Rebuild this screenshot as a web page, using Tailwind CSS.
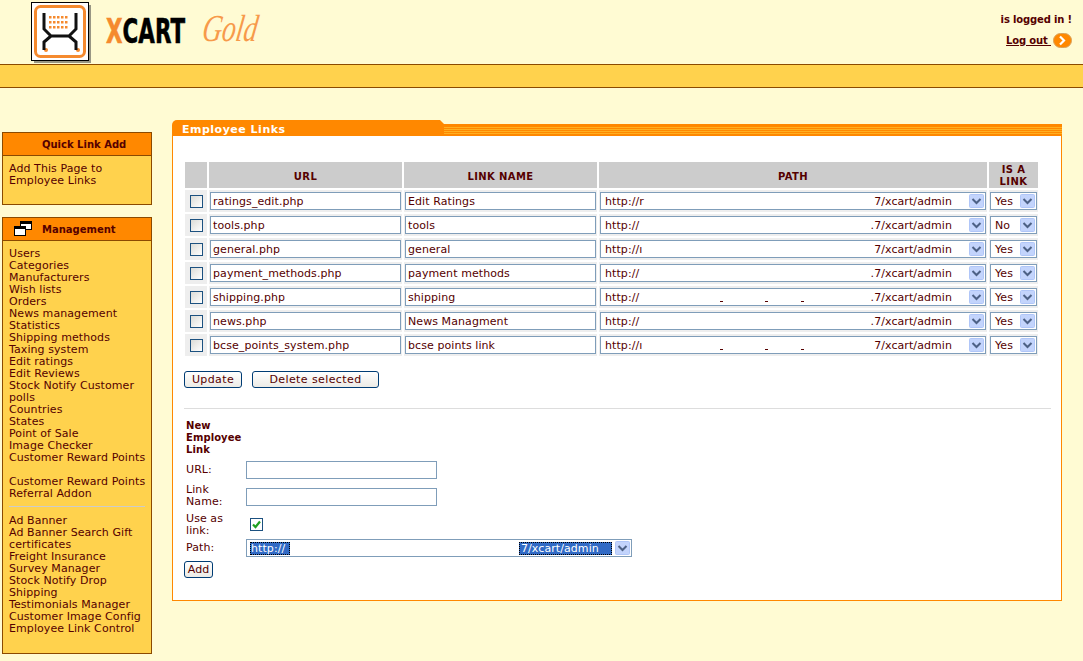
<!DOCTYPE html>
<html lang="en">
<head>
<meta charset="utf-8">
<title>X-Cart Gold - Employee Links</title>
<script src="https://cdn.jsdelivr.net/npm/@tailwindcss/browser@4"></script>
</head>
<body class="bg-[#FFFBD3] text-[#550000] text-[11px] leading-[12px] tracking-[0.08px] font-['DejaVu_Sans','Liberation_Sans',sans-serif] w-[1083px] h-[661px] overflow-hidden">
<header class="h-[64px] flex justify-between">
  <svg width="300" height="64" viewBox="0 0 300 64">
    <rect x="34" y="5" width="57" height="58" fill="#444" opacity=".55"/>
    <rect x="31.500" y="2.500" width="57" height="58" fill="#fff" stroke="#000"/>
    <rect x="35.500" y="6.500" width="49" height="50" rx="5" fill="#fff" stroke="#F58A2E" stroke-width="3"/>
    <g fill="#F58A2E">
      <rect x="49" y="16" width="2.500" height="2.500"/><rect x="53" y="16" width="2.500" height="2.500"/><rect x="57" y="16" width="2.500" height="2.500"/><rect x="61" y="16" width="2.500" height="2.500"/><rect x="65" y="16" width="2.500" height="2.500"/>
      <rect x="49" y="21" width="2.500" height="2.500"/><rect x="53" y="21" width="2.500" height="2.500"/><rect x="57" y="21" width="2.500" height="2.500"/><rect x="61" y="21" width="2.500" height="2.500"/><rect x="65" y="21" width="2.500" height="2.500"/>
      <rect x="49" y="26" width="2.500" height="2.500"/><rect x="53" y="26" width="2.500" height="2.500"/><rect x="57" y="26" width="2.500" height="2.500"/><rect x="61" y="26" width="2.500" height="2.500"/><rect x="65" y="26" width="2.500" height="2.500"/>
      <circle cx="46" cy="50" r="2"/><circle cx="78" cy="50" r="2"/>
    </g>
    <path d="M44 13V29L51 36H69L76 29V13M51 36L44 42V50M69 36L76 42V50" fill="none" stroke="#111" stroke-width="3"/>
    <text transform="translate(106 43) scale(.63 1)" font-family="'DejaVu Sans','Liberation Sans',sans-serif" font-weight="700" font-size="34" stroke="#000" stroke-width=".6" fill="#000"><tspan fill="#F58A2E" stroke="#F58A2E">X</tspan>CART</text>
    <text transform="translate(201 41) scale(.72 1) skewX(-12)" font-family="'Liberation Serif',serif" font-style="italic" font-size="38" fill="#F79A4A">Gold</text>
  </svg>
  <div class="w-[120px] mr-[11px] flex flex-col items-end font-bold text-[10px] tracking-[-0.15px]">
    <p class="mt-[14px] h-[12px]">is logged in !</p>
    <div class="mt-[7px] flex items-center gap-[2px]">
      <a class="underline">Log out&nbsp;</a>
      <svg width="19" height="15" viewBox="0 0 19 15"><rect x=".5" y=".5" width="18" height="14" rx="7" fill="#FF8800" stroke="#D9A25A"/><path d="M7 3.500L11 7.500L7 11.500" fill="none" stroke="#fff" stroke-width="2.200"/></svg>
    </div>
  </div>
</header>
<div class="h-[24px] bg-[#FFD24D] border-y border-[#8B4A00]"></div>

<div class="flex">
  <aside class="w-[150px] ml-[2px] pt-[44px] flex flex-col gap-[12px] shrink-0">
    <section class="h-[73px] border border-[#8B4A00] bg-[#FFD24D]">
      <h2 class="h-[23px] bg-[#FF8800] border-b border-[#8B4A00] flex items-center pl-[39px] pt-[2px] font-bold text-[10px] tracking-[0px]">Quick Link Add</h2>
      <p class="px-[6px] pt-[7px]">Add This Page to<br>Employee Links</p>
    </section>
    <section class="h-[437px] border border-[#8B4A00] bg-[#FFD24D]">
      <h2 class="h-[23px] bg-[#FF8800] border-b border-[#8B4A00] flex items-center pl-[39px] pt-[2px] font-bold text-[10px] tracking-[0px] relative">
        <svg class="absolute left-[11px] top-[3px]" width="18" height="16" viewBox="0 0 18 16"><rect x="6.500" y=".5" width="11" height="8" fill="#fff" stroke="#000"/><rect x="6.500" y=".5" width="11" height="2.500" fill="#000"/><rect x=".5" y="5.500" width="11" height="9" fill="#fff" stroke="#000"/><rect x=".5" y="5.500" width="11" height="2.500" fill="#000"/></svg>
        Management
      </h2>
      <div class="pl-[6px] pt-[7px]">
        <p>Users</p><p>Categories</p><p>Manufacturers</p><p>Wish lists</p><p>Orders</p><p>News management</p><p>Statistics</p><p>Shipping methods</p><p>Taxing system</p><p>Edit ratings</p><p>Edit Reviews</p><p>Stock Notify Customer</p><p>polls</p><p>Countries</p><p>States</p><p>Point of Sale</p><p>Image Checker</p><p>Customer Reward Points</p>
        <p class="mt-[12px]">Customer Reward Points</p><p>Referral Addon</p>
        <hr class="mt-[6px] mb-[8px] mr-[6px] border-0 h-[1px] bg-[#CCCCCC]">
        <p>Ad Banner</p><p>Ad Banner Search Gift</p><p>certificates</p><p>Freight Insurance</p><p>Survey Manager</p><p>Stock Notify Drop</p><p>Shipping</p><p>Testimonials Manager</p><p>Customer Image Config</p><p>Employee Link Control</p>
      </div>
    </section>
  </aside>

  <main class="w-[890px] ml-[20px] pt-[32px]">
    <div class="h-[16px] flex items-end">
      <h1 class="w-[268px] h-[16px] bg-[#FF8800] rounded-tl-[5px] text-white font-bold pl-[10px] pt-[4px] tracking-[0.5px]">Employee Links</h1>
      <div class="w-[4px] h-[16px] bg-[#FF8800] [clip-path:polygon(0_0,100%_25%,100%_100%,0_100%)]"></div>
      <div class="flex-1 h-[12px] bg-[#FF8800] pt-[3px]"><div class="h-[7px] bg-[repeating-linear-gradient(180deg,#FFB020_0px,#FFB020_1px,#FF8800_1px,#FF8800_2px)]"></div></div>
    </div>
    <div class="h-[465px] bg-white border border-t-0 border-[#FF8800] pt-[26px] pl-[12px]">
      <div class="grid grid-cols-[22px_193px_193px_388px_49px] gap-[2px] w-[853px]">
        <div class="h-[26px] bg-[#CCCCCC]"></div>
        <div class="h-[26px] bg-[#CCCCCC] flex items-center justify-center pt-[3px] font-bold text-[10px] tracking-[0.4px]">URL</div>
        <div class="h-[26px] bg-[#CCCCCC] flex items-center justify-center pt-[3px] font-bold text-[10px] tracking-[0.4px]">LINK NAME</div>
        <div class="h-[26px] bg-[#CCCCCC] flex items-center justify-center pt-[3px] font-bold text-[10px] tracking-[0.4px]">PATH</div>
        <div class="h-[26px] bg-[#CCCCCC] flex items-center justify-center pt-[1px] text-center font-bold text-[10px] tracking-[0.4px]">IS A<br>LINK</div>

        <div class="h-[22px] bg-[#EEEEEE] flex items-center justify-center"><span class="w-[13px] h-[13px] border border-[#1C5180] bg-gradient-to-br from-[#DCDCD7] to-white"></span></div>
        <div class="h-[22px] bg-[#EEEEEE] flex items-center px-[1px]"><span class="w-full h-[18px] border border-[#7F9DB9] bg-white px-[2px] leading-[18px]">ratings_edit.php</span></div>
        <div class="h-[22px] bg-[#EEEEEE] flex items-center px-[1px]"><span class="w-full h-[18px] border border-[#7F9DB9] bg-white px-[2px] leading-[18px]">Edit Ratings</span></div>
        <div class="h-[22px] bg-[#EEEEEE] flex items-center px-[1px]"><span class="w-full h-[18px] border border-[#7F9DB9] bg-white pl-[4px] leading-[18px] flex justify-between"><span>http://r</span><span class="flex items-center"><span class="mr-[16px] mt-[2px]">7/xcart/admin</span><svg width="17" height="16" viewBox="0 0 17 16"><rect x="1.500" y="1.500" width="14" height="13" rx="1" fill="#C3D4FC" stroke="#B0C6F8"/><path d="M4.500 6L8.500 10L12.500 6" fill="none" stroke="#4D6185" stroke-width="2"/></svg></span></span></div>
        <div class="h-[22px] bg-[#EEEEEE] flex items-center px-[1px]"><span class="w-full h-[18px] border border-[#7F9DB9] bg-white pl-[4px] leading-[18px] flex justify-between"><span>Yes</span><svg width="17" height="16" viewBox="0 0 17 16"><rect x="1.500" y="1.500" width="14" height="13" rx="1" fill="#C3D4FC" stroke="#B0C6F8"/><path d="M4.500 6L8.500 10L12.500 6" fill="none" stroke="#4D6185" stroke-width="2"/></svg></span></div>

        <div class="h-[22px] bg-[#EEEEEE] flex items-center justify-center"><span class="w-[13px] h-[13px] border border-[#1C5180] bg-gradient-to-br from-[#DCDCD7] to-white"></span></div>
        <div class="h-[22px] bg-[#EEEEEE] flex items-center px-[1px]"><span class="w-full h-[18px] border border-[#7F9DB9] bg-white px-[2px] leading-[18px]">tools.php</span></div>
        <div class="h-[22px] bg-[#EEEEEE] flex items-center px-[1px]"><span class="w-full h-[18px] border border-[#7F9DB9] bg-white px-[2px] leading-[18px]">tools</span></div>
        <div class="h-[22px] bg-[#EEEEEE] flex items-center px-[1px]"><span class="w-full h-[18px] border border-[#7F9DB9] bg-white pl-[4px] leading-[18px] flex justify-between"><span>http://</span><span class="flex items-center"><span class="mr-[16px] mt-[2px]">.7/xcart/admin</span><svg width="17" height="16" viewBox="0 0 17 16"><rect x="1.500" y="1.500" width="14" height="13" rx="1" fill="#C3D4FC" stroke="#B0C6F8"/><path d="M4.500 6L8.500 10L12.500 6" fill="none" stroke="#4D6185" stroke-width="2"/></svg></span></span></div>
        <div class="h-[22px] bg-[#EEEEEE] flex items-center px-[1px]"><span class="w-full h-[18px] border border-[#7F9DB9] bg-white pl-[4px] leading-[18px] flex justify-between"><span>No</span><svg width="17" height="16" viewBox="0 0 17 16"><rect x="1.500" y="1.500" width="14" height="13" rx="1" fill="#C3D4FC" stroke="#B0C6F8"/><path d="M4.500 6L8.500 10L12.500 6" fill="none" stroke="#4D6185" stroke-width="2"/></svg></span></div>

        <div class="h-[22px] bg-[#EEEEEE] flex items-center justify-center"><span class="w-[13px] h-[13px] border border-[#1C5180] bg-gradient-to-br from-[#DCDCD7] to-white"></span></div>
        <div class="h-[22px] bg-[#EEEEEE] flex items-center px-[1px]"><span class="w-full h-[18px] border border-[#7F9DB9] bg-white px-[2px] leading-[18px]">general.php</span></div>
        <div class="h-[22px] bg-[#EEEEEE] flex items-center px-[1px]"><span class="w-full h-[18px] border border-[#7F9DB9] bg-white px-[2px] leading-[18px]">general</span></div>
        <div class="h-[22px] bg-[#EEEEEE] flex items-center px-[1px]"><span class="w-full h-[18px] border border-[#7F9DB9] bg-white pl-[4px] leading-[18px] flex justify-between"><span>http://ı</span><span class="flex items-center"><span class="mr-[16px] mt-[2px]">7/xcart/admin</span><svg width="17" height="16" viewBox="0 0 17 16"><rect x="1.500" y="1.500" width="14" height="13" rx="1" fill="#C3D4FC" stroke="#B0C6F8"/><path d="M4.500 6L8.500 10L12.500 6" fill="none" stroke="#4D6185" stroke-width="2"/></svg></span></span></div>
        <div class="h-[22px] bg-[#EEEEEE] flex items-center px-[1px]"><span class="w-full h-[18px] border border-[#7F9DB9] bg-white pl-[4px] leading-[18px] flex justify-between"><span>Yes</span><svg width="17" height="16" viewBox="0 0 17 16"><rect x="1.500" y="1.500" width="14" height="13" rx="1" fill="#C3D4FC" stroke="#B0C6F8"/><path d="M4.500 6L8.500 10L12.500 6" fill="none" stroke="#4D6185" stroke-width="2"/></svg></span></div>

        <div class="h-[22px] bg-[#EEEEEE] flex items-center justify-center"><span class="w-[13px] h-[13px] border border-[#1C5180] bg-gradient-to-br from-[#DCDCD7] to-white"></span></div>
        <div class="h-[22px] bg-[#EEEEEE] flex items-center px-[1px]"><span class="w-full h-[18px] border border-[#7F9DB9] bg-white px-[2px] leading-[18px]">payment_methods.php</span></div>
        <div class="h-[22px] bg-[#EEEEEE] flex items-center px-[1px]"><span class="w-full h-[18px] border border-[#7F9DB9] bg-white px-[2px] leading-[18px]">payment methods</span></div>
        <div class="h-[22px] bg-[#EEEEEE] flex items-center px-[1px]"><span class="w-full h-[18px] border border-[#7F9DB9] bg-white pl-[4px] leading-[18px] flex justify-between"><span>http://</span><span class="flex items-center"><span class="mr-[16px] mt-[2px]">.7/xcart/admin</span><svg width="17" height="16" viewBox="0 0 17 16"><rect x="1.500" y="1.500" width="14" height="13" rx="1" fill="#C3D4FC" stroke="#B0C6F8"/><path d="M4.500 6L8.500 10L12.500 6" fill="none" stroke="#4D6185" stroke-width="2"/></svg></span></span></div>
        <div class="h-[22px] bg-[#EEEEEE] flex items-center px-[1px]"><span class="w-full h-[18px] border border-[#7F9DB9] bg-white pl-[4px] leading-[18px] flex justify-between"><span>Yes</span><svg width="17" height="16" viewBox="0 0 17 16"><rect x="1.500" y="1.500" width="14" height="13" rx="1" fill="#C3D4FC" stroke="#B0C6F8"/><path d="M4.500 6L8.500 10L12.500 6" fill="none" stroke="#4D6185" stroke-width="2"/></svg></span></div>

        <div class="h-[22px] bg-[#EEEEEE] flex items-center justify-center"><span class="w-[13px] h-[13px] border border-[#1C5180] bg-gradient-to-br from-[#DCDCD7] to-white"></span></div>
        <div class="h-[22px] bg-[#EEEEEE] flex items-center px-[1px]"><span class="w-full h-[18px] border border-[#7F9DB9] bg-white px-[2px] leading-[18px]">shipping.php</span></div>
        <div class="h-[22px] bg-[#EEEEEE] flex items-center px-[1px]"><span class="w-full h-[18px] border border-[#7F9DB9] bg-white px-[2px] leading-[18px]">shipping</span></div>
        <div class="h-[22px] bg-[#EEEEEE] flex items-center px-[1px]"><span class="relative w-full h-[18px] border border-[#7F9DB9] bg-white pl-[4px] leading-[18px] flex justify-between"><span>http://</span><span class="absolute left-[119px] top-[12px] w-[3px] h-[1px] bg-[#550000]"></span><span class="absolute left-[164px] top-[12px] w-[3px] h-[1px] bg-[#550000]"></span><span class="absolute left-[200px] top-[12px] w-[3px] h-[1px] bg-[#550000]"></span><span class="flex items-center"><span class="mr-[16px] mt-[2px]">.7/xcart/admin</span><svg width="17" height="16" viewBox="0 0 17 16"><rect x="1.500" y="1.500" width="14" height="13" rx="1" fill="#C3D4FC" stroke="#B0C6F8"/><path d="M4.500 6L8.500 10L12.500 6" fill="none" stroke="#4D6185" stroke-width="2"/></svg></span></span></div>
        <div class="h-[22px] bg-[#EEEEEE] flex items-center px-[1px]"><span class="w-full h-[18px] border border-[#7F9DB9] bg-white pl-[4px] leading-[18px] flex justify-between"><span>Yes</span><svg width="17" height="16" viewBox="0 0 17 16"><rect x="1.500" y="1.500" width="14" height="13" rx="1" fill="#C3D4FC" stroke="#B0C6F8"/><path d="M4.500 6L8.500 10L12.500 6" fill="none" stroke="#4D6185" stroke-width="2"/></svg></span></div>

        <div class="h-[22px] bg-[#EEEEEE] flex items-center justify-center"><span class="w-[13px] h-[13px] border border-[#1C5180] bg-gradient-to-br from-[#DCDCD7] to-white"></span></div>
        <div class="h-[22px] bg-[#EEEEEE] flex items-center px-[1px]"><span class="w-full h-[18px] border border-[#7F9DB9] bg-white px-[2px] leading-[18px]">news.php</span></div>
        <div class="h-[22px] bg-[#EEEEEE] flex items-center px-[1px]"><span class="w-full h-[18px] border border-[#7F9DB9] bg-white px-[2px] leading-[18px]">News Managment</span></div>
        <div class="h-[22px] bg-[#EEEEEE] flex items-center px-[1px]"><span class="w-full h-[18px] border border-[#7F9DB9] bg-white pl-[4px] leading-[18px] flex justify-between"><span>http://</span><span class="flex items-center"><span class="mr-[16px] mt-[2px]">.7/xcart/admin</span><svg width="17" height="16" viewBox="0 0 17 16"><rect x="1.500" y="1.500" width="14" height="13" rx="1" fill="#C3D4FC" stroke="#B0C6F8"/><path d="M4.500 6L8.500 10L12.500 6" fill="none" stroke="#4D6185" stroke-width="2"/></svg></span></span></div>
        <div class="h-[22px] bg-[#EEEEEE] flex items-center px-[1px]"><span class="w-full h-[18px] border border-[#7F9DB9] bg-white pl-[4px] leading-[18px] flex justify-between"><span>Yes</span><svg width="17" height="16" viewBox="0 0 17 16"><rect x="1.500" y="1.500" width="14" height="13" rx="1" fill="#C3D4FC" stroke="#B0C6F8"/><path d="M4.500 6L8.500 10L12.500 6" fill="none" stroke="#4D6185" stroke-width="2"/></svg></span></div>

        <div class="h-[22px] bg-[#EEEEEE] flex items-center justify-center"><span class="w-[13px] h-[13px] border border-[#1C5180] bg-gradient-to-br from-[#DCDCD7] to-white"></span></div>
        <div class="h-[22px] bg-[#EEEEEE] flex items-center px-[1px]"><span class="w-full h-[18px] border border-[#7F9DB9] bg-white px-[2px] leading-[18px]">bcse_points_system.php</span></div>
        <div class="h-[22px] bg-[#EEEEEE] flex items-center px-[1px]"><span class="w-full h-[18px] border border-[#7F9DB9] bg-white px-[2px] leading-[18px]">bcse points link</span></div>
        <div class="h-[22px] bg-[#EEEEEE] flex items-center px-[1px]"><span class="relative w-full h-[18px] border border-[#7F9DB9] bg-white pl-[4px] leading-[18px] flex justify-between"><span>http://ı</span><span class="absolute left-[119px] top-[12px] w-[3px] h-[1px] bg-[#550000]"></span><span class="absolute left-[164px] top-[12px] w-[3px] h-[1px] bg-[#550000]"></span><span class="absolute left-[200px] top-[12px] w-[3px] h-[1px] bg-[#550000]"></span><span class="flex items-center"><span class="mr-[16px] mt-[2px]">7/xcart/admin</span><svg width="17" height="16" viewBox="0 0 17 16"><rect x="1.500" y="1.500" width="14" height="13" rx="1" fill="#C3D4FC" stroke="#B0C6F8"/><path d="M4.500 6L8.500 10L12.500 6" fill="none" stroke="#4D6185" stroke-width="2"/></svg></span></span></div>
        <div class="h-[22px] bg-[#EEEEEE] flex items-center px-[1px]"><span class="w-full h-[18px] border border-[#7F9DB9] bg-white pl-[4px] leading-[18px] flex justify-between"><span>Yes</span><svg width="17" height="16" viewBox="0 0 17 16"><rect x="1.500" y="1.500" width="14" height="13" rx="1" fill="#C3D4FC" stroke="#B0C6F8"/><path d="M4.500 6L8.500 10L12.500 6" fill="none" stroke="#4D6185" stroke-width="2"/></svg></span></div>
      </div>

      <div class="flex gap-[10px] mt-[15px] -ml-[1px]">
        <span class="w-[58px] h-[17px] border border-[#003C74] rounded-[3px] bg-gradient-to-b from-white to-[#ECEBE6] flex items-center justify-center tracking-[0.4px]">Update</span>
        <span class="w-[127px] h-[17px] border border-[#003C74] rounded-[3px] bg-gradient-to-b from-white to-[#ECEBE6] flex items-center justify-center tracking-[0.4px]">Delete selected</span>
      </div>
      <hr class="mt-[20px] mr-[10px] -ml-[1px] border-0 h-[1px] bg-[#DDDDDD]">

      <div class="mt-[11px] ml-[1px] grid grid-cols-[60px_1fr] items-center">
        <h3 class="font-bold text-[10px] w-[56px] mb-[5px] col-span-2">New Employee Link</h3>
        <span>URL:</span>
        <span class="w-[191px] h-[18px] border border-[#7F9DB9] bg-white"></span>
        <span class="mt-[5px]">Link Name:</span>
        <span class="w-[191px] h-[18px] mt-[7px] border border-[#7F9DB9] bg-white"></span>
        <span class="mt-[5px] w-[50px]">Use as link:</span>
        <span class="ml-[4px] mt-[3px] w-[13px] h-[13px] border border-[#1C5180] bg-white flex items-center justify-center"><svg width="11" height="11" viewBox="0 0 11 11"><path d="M2 5.500L4.500 8L9 2.500" fill="none" stroke="#21A121" stroke-width="2.200"/></svg></span>
        <span class="mt-[2px]">Path:</span>
        <span class="w-[386px] h-[18px] mt-[2px] border border-[#7F9DB9] bg-white pl-[3px] flex items-center justify-between">
          <span class="w-[40px] bg-[#316AC5] text-white outline-1 outline-dotted outline-black -outline-offset-1 px-[1px] leading-[13px]">http://</span>
          <span class="flex items-center"><span class="bg-[#316AC5] text-white w-[93px] px-[2px] leading-[13px] outline-1 outline-dotted outline-black -outline-offset-1 mr-[2px] ml-auto">7/xcart/admin</span><svg width="17" height="16" viewBox="0 0 17 16"><rect x="1.500" y="1.500" width="14" height="13" rx="1" fill="#C3D4FC" stroke="#B0C6F8"/><path d="M4.500 6L8.500 10L12.500 6" fill="none" stroke="#4D6185" stroke-width="2"/></svg></span>
        </span>
      </div>
      <span class="mt-[4px] -ml-[1px] w-[29px] h-[17px] border border-[#003C74] rounded-[3px] bg-gradient-to-b from-white to-[#ECEBE6] flex items-center justify-center">Add</span>
    </div>
  </main>
</div>
</body>
</html>
